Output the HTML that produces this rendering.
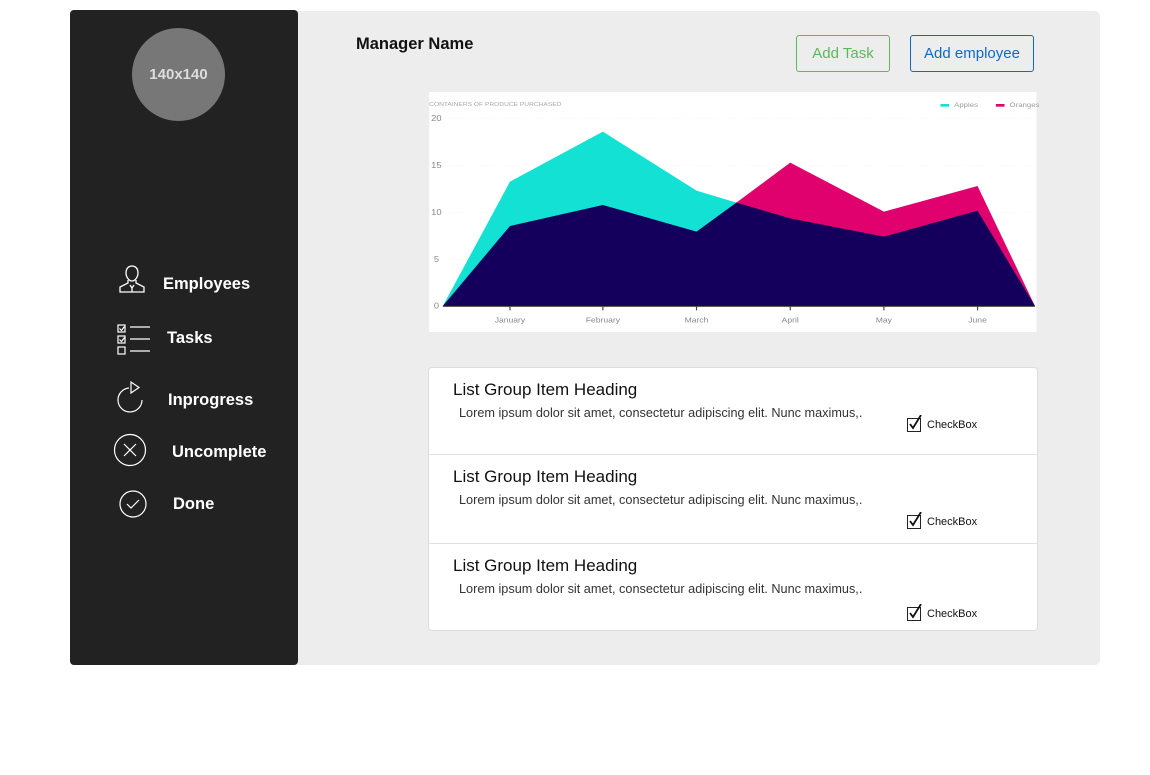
<!DOCTYPE html>
<html><head><meta charset="utf-8"><style>
*{margin:0;padding:0;box-sizing:border-box}
body{width:1150px;height:775px;background:#fff;font-family:"Liberation Sans",sans-serif;position:relative;overflow:hidden}
.main{position:absolute;left:290px;top:11px;width:810px;height:654px;background:#ededed;border-radius:5px}
.side{position:absolute;left:70px;top:10px;width:228px;height:655px;background:#222;border-radius:4px}
.avatar{position:absolute;left:132px;top:28px;width:93px;height:93px;border-radius:50%;background:#777;color:#ddd;font-weight:bold;font-size:15px;display:flex;align-items:center;justify-content:center}
.nav{position:absolute;color:#fff;font-weight:bold;font-size:16.5px}
.ic{position:absolute}
.abs{position:absolute}
.btn{position:absolute;border:1px solid;border-radius:3px;font-size:15px;display:flex;align-items:center;justify-content:center;background:transparent}
.list{position:absolute;left:428px;top:367px;width:610px;height:264px;background:#fff;border:1px solid #ddd;border-radius:4px}
.row{position:absolute;left:0;width:608px;border-bottom:1px solid #e2e2e2}
.h{position:absolute;left:24px;font-size:17px;color:#111}
.p{position:absolute;left:30px;font-size:12.7px;color:#333}
.cb{position:absolute;left:478px;font-size:11px;color:#111;display:flex;align-items:center;gap:6px}
.box{width:14px;height:14px;border:1.5px solid #222;position:relative}
</style></head><body>
<div class="main"></div>
<div class="side"></div>
<div class="avatar">140x140</div>

<svg class="ic" style="left:117px;top:264px" width="30" height="30" viewBox="0 0 30 30" fill="none" stroke="#fff" stroke-width="1.3"><path d="M9 9c0-5 3-7 6-7s6 2 6 7c0 4-3 8-6 8s-6-4-6-8z"/><path d="M11 16v3l-8 4v5h24v-5l-8-4v-3"/><path d="M13 21l2 3 2-3M15 24v4"/></svg>
<div class="nav" style="left:163px;top:275px">Employees</div>

<svg class="ic" style="left:117px;top:324px" width="34" height="32" viewBox="0 0 34 32" fill="none" stroke="#fff" stroke-width="1.2"><rect x="1" y="1" width="7" height="7"/><rect x="1" y="12" width="7" height="7"/><rect x="1" y="23" width="7" height="7"/><path d="M2.5 4.5l2 2 3-4M2.5 15.5l2 2 3-4"/><path d="M13 3h20M13 15h20M13 27h20"/></svg>
<div class="nav" style="left:167px;top:329px">Tasks</div>

<svg class="ic" style="left:116px;top:380px" width="30" height="34" viewBox="0 0 30 34" fill="none" stroke="#fff" stroke-width="1.2"><path d="M13 8A12 12 0 1 0 26 20"/><path d="M15 2v11l8-5.5z"/></svg>
<div class="nav" style="left:168px;top:391px">Inprogress</div>

<svg class="ic" style="left:113px;top:433px" width="34" height="34" viewBox="0 0 34 34" fill="none" stroke="#fff" stroke-width="1.2"><circle cx="17" cy="17" r="15.5"/><path d="M11 11l12 12M23 11L11 23"/></svg>
<div class="nav" style="left:172px;top:443px">Uncomplete</div>

<svg class="ic" style="left:118px;top:489px" width="30" height="30" viewBox="0 0 30 30" fill="none" stroke="#fff" stroke-width="1.2"><circle cx="15" cy="15" r="13"/><path d="M9 15l4 4 8-8"/></svg>
<div class="nav" style="left:173px;top:495px">Done</div>

<div class="abs" style="left:356px;top:35px;font-weight:bold;font-size:16.5px;color:#111">Manager Name</div>
<div class="btn" style="left:796px;top:35px;width:94px;height:37px;color:#5cb85c;border-color:#5cb85c">Add Task</div>
<div class="btn" style="left:910px;top:35px;width:124px;height:37px;color:#0a6bc8;border-color:#0a6bc8">Add employee</div>

<svg class="abs" style="left:428px;top:90px" width="612" height="245" viewBox="0 0 1568 735" preserveAspectRatio="none">
<rect x="3" y="6" width="1556" height="720" fill="#fff"/>
<text x="3" y="48" font-size="17" fill="#aaa">CONTAINERS OF PRODUCE PURCHASED</text>
<rect x="1313" y="42" width="22" height="8" fill="#13e1d4"/><text x="1348" y="51" font-size="20" fill="#999">Apples</text>
<rect x="1455" y="42" width="22" height="8" fill="#e0006e"/><text x="1490" y="51" font-size="20" fill="#999">Oranges</text>
<g font-size="24" fill="#888"><text x="8" y="93">20</text><text x="8" y="234">15</text><text x="8" y="375">10</text><text x="15" y="516">5</text><text x="15" y="656">0</text></g>
<g stroke="#eee" stroke-dasharray="6 6"><path d="M38 85H1555M38 226H1555M38 367H1555M38 508H1555"/></g>
<polygon fill="#13e1d4" points="38,648 210,275 448,125 688,302 790,338 790,648"/>
<polygon fill="#e0006e" points="790,338 928,218 1168,365 1408,288 1555,648 790,648"/>
<polygon fill="#14005c" points="38,648 210,408 448,345 688,425 790,338 928,385 1168,440 1408,362 1555,648"/>
<path d="M38 649H1555" stroke="#444" stroke-width="3"/>
<g stroke="#444" stroke-width="3"><path d="M210 649v12M448 649v12M688 649v12M928 649v12M1168 649v12M1408 649v12"/></g>
<g font-size="22" fill="#888" text-anchor="middle"><text x="210" y="698">January</text><text x="448" y="698">February</text><text x="688" y="698">March</text><text x="928" y="698">April</text><text x="1168" y="698">May</text><text x="1408" y="698">June</text></g>
</svg>

<div class="list">
 <div class="row" style="top:0;height:87px"><div class="h" style="top:12px">List Group Item Heading</div><div class="p" style="top:38px">Lorem ipsum dolor sit amet, consectetur adipiscing elit. Nunc maximus,.</div><div class="cb" style="top:50px"><div class="box"><svg style="position:absolute;left:0;top:-4px" width="16" height="16" viewBox="0 0 16 16"><path d="M2 9l3 4 8-13" fill="none" stroke="#111" stroke-width="1.8"/></svg></div>CheckBox</div></div>
 <div class="row" style="top:87px;height:89px"><div class="h" style="top:12px">List Group Item Heading</div><div class="p" style="top:38px">Lorem ipsum dolor sit amet, consectetur adipiscing elit. Nunc maximus,.</div><div class="cb" style="top:60px"><div class="box"><svg style="position:absolute;left:0;top:-4px" width="16" height="16" viewBox="0 0 16 16"><path d="M2 9l3 4 8-13" fill="none" stroke="#111" stroke-width="1.8"/></svg></div>CheckBox</div></div>
 <div class="row" style="top:176px;height:87px;border-bottom:none"><div class="h" style="top:12px">List Group Item Heading</div><div class="p" style="top:38px">Lorem ipsum dolor sit amet, consectetur adipiscing elit. Nunc maximus,.</div><div class="cb" style="top:63px"><div class="box"><svg style="position:absolute;left:0;top:-4px" width="16" height="16" viewBox="0 0 16 16"><path d="M2 9l3 4 8-13" fill="none" stroke="#111" stroke-width="1.8"/></svg></div>CheckBox</div></div>
</div>
</body></html>
